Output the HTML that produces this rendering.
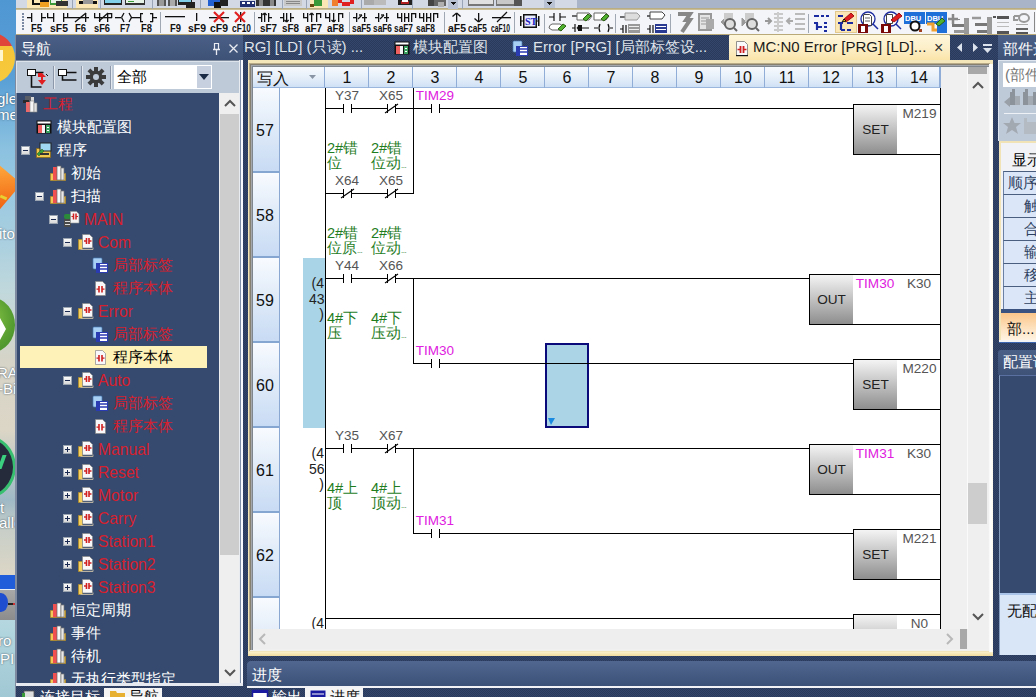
<!DOCTYPE html>
<html><head><meta charset="utf-8">
<style>
*{margin:0;padding:0;box-sizing:border-box}
html,body{width:1036px;height:697px;overflow:hidden;background:repeating-conic-gradient(#2a3a5a 0 25%,#33456a 0 50%) 0 0/2px 2px;font-family:"Liberation Sans",sans-serif}
.a{position:absolute}
.t{position:absolute;white-space:nowrap;line-height:1}
svg{position:absolute;overflow:visible}
.cj{font-size:15px;margin-top:-1px}
.exp{position:absolute;width:9px;height:9px;background:linear-gradient(#fbfbfb,#d8d8d8);border:1px solid #9aa3b0}
.exp::after{content:"";position:absolute;left:1px;top:3px;width:5px;height:1px;background:#1a2a50}
.plus::before{content:"";position:absolute;left:3px;top:1px;width:1px;height:5px;background:#1a2a50}
</style></head><body>

<div class="a" style="left:0;top:0;width:16px;height:697px;overflow:hidden;background:linear-gradient(#4f97d3 0px,#5aa0d6 80px,#8cc2e0 150px,#a9cfe0 240px,#c0d8dc 290px,#d6d4c8 360px,#dcd6c6 430px,#9fb9c6 500px,#c8cfc8 530px,#dcd6c6 575px)"><div class="a" style="left:-37px;top:32px;width:52px;height:52px;border-radius:50%;background:linear-gradient(#e0463a 0,#e0463a 27%,#f6c638 27%,#f7c93c 100%)"></div><div class="a" style="left:0;top:50px;width:3px;height:11px;background:#fff6d0"></div><div class="t" style="left:-3px;top:91px;font-size:15px;color:#fff;text-shadow:0 0 2px #345">gle</div><div class="t" style="left:-3px;top:107px;font-size:15px;color:#fff;text-shadow:0 0 2px #345">me</div><div class="a" style="left:-22px;top:168px;width:36px;height:36px;transform:rotate(40deg);background:linear-gradient(135deg,#ffb040,#f06010);border-radius:3px 3px 3px 14px"></div><div class="a" style="left:0;top:196px;width:7px;height:3px;transform:rotate(25deg);background:#e8d030"></div><div class="t" style="left:-1px;top:226px;font-size:15px;color:#fff;text-shadow:0 0 2px #345">ito</div><div class="a" style="left:-30px;top:298px;width:45px;height:54px;border-radius:50% 50% 50% 50%;background:radial-gradient(circle at 30% 40%,#9ad050,#5aa032 60%,#3e8a2a)"></div><div class="a" style="left:0;top:318px;width:0;height:0;border-left:6px solid #fff;border-top:11px solid transparent;border-bottom:11px solid transparent"></div><div class="t" style="left:-3px;top:365px;font-size:15px;color:#fff;text-shadow:0 0 2px #345">RA</div><div class="t" style="left:-2px;top:381px;font-size:15px;color:#fff;text-shadow:0 0 2px #345">-Bi</div><div class="a" style="left:-46px;top:435px;width:62px;height:64px;border-radius:50%;background:#262b3b;border:3px solid #38c070"></div><div class="a" style="left:0;top:455px;width:4px;height:14px;background:#3ad080;transform:skewX(-20deg)"></div><div class="t" style="left:0;top:500px;font-size:15px;color:#fff;text-shadow:0 0 2px #345">t</div><div class="t" style="left:-1px;top:515px;font-size:15px;color:#fff;text-shadow:0 0 2px #345">alle</div><div class="a" style="left:0;top:575px;width:16px;height:14px;background:#1f5ddb"></div><div class="a" style="left:0;top:589px;width:16px;height:1px;background:#e8eef8"></div><div class="a" style="left:0;top:590px;width:16px;height:30px;background:linear-gradient(#a8a8a8,#8c8c8c)"></div><div class="a" style="left:-6px;top:593px;width:14px;height:19px;border-radius:50%;background:#1f4fd0"></div><div class="a" style="left:8px;top:603px;width:8px;height:2px;background:#222;border-right:3px solid #d03030"></div><div class="a" style="left:0;top:620px;width:16px;height:77px;background:linear-gradient(#b5d8e0,#a0c8d4)"></div><div class="t" style="left:-2px;top:633px;font-size:15px;color:#fff;text-shadow:0 0 2px #345">ro</div><div class="t" style="left:0;top:651px;font-size:15px;color:#fff;text-shadow:0 0 2px #345">PI</div></div>
<div class="a" style="left:15px;top:35px;width:2px;height:662px;background:#7d8aa0"></div>
<svg style="left:16px;top:0" width="1020" height="9" shape-rendering="crispEdges"><rect x="0" y="0" width="561" height="9" fill="#d3d9e5"/><rect x="561" y="0" width="459" height="9" fill="#a9b4c8"/><rect x="0" y="8" width="1020" height="1" fill="#b9ad84"/><rect x="11" y="0" width="40" height="8" fill="#fbe7b5"/><rect x="60" y="0" width="22" height="8" fill="#fbe7b5"/><rect x="294" y="0" width="18" height="8" fill="#fbe7b5"/><rect x="16" y="0" width="15" height="5" fill="#111"/><rect x="18" y="0" width="11" height="3" fill="#fbe7b5"/><rect x="24" y="1" width="9" height="6" fill="#f0a020"/><rect x="24" y="0" width="9" height="2" fill="#111"/><rect x="34" y="0" width="12" height="5" fill="#3a9a3a"/><rect x="35" y="0" width="10" height="3" fill="#e8f4e8"/><rect x="40" y="1" width="12" height="5" fill="#333"/><rect x="56" y="0" width="1" height="9" fill="#9aa6b8"/><rect x="63" y="1" width="18" height="3" fill="#111"/><rect x="67" y="0" width="10" height="4" fill="#999"/><rect x="84" y="0" width="1" height="9" fill="#9aa6b8"/><rect x="88" y="0" width="18" height="5" fill="#222"/><rect x="89" y="0" width="16" height="3" fill="#7fd0e8"/><rect x="109" y="0" width="20" height="5" fill="#333"/><rect x="110" y="0" width="18" height="3" fill="#e8f4e8"/><rect x="112" y="1" width="6" height="1" fill="#3a9a3a"/><rect x="136" y="0" width="1" height="9" fill="#9aa6b8"/><rect x="141" y="0" width="9" height="6" fill="#555"/><rect x="143" y="0" width="5" height="6" fill="#999"/><rect x="152" y="0" width="9" height="6" fill="#555"/><rect x="154" y="0" width="5" height="6" fill="#aaa"/><rect x="162" y="0" width="14" height="5" fill="#222"/><rect x="163" y="0" width="12" height="2" fill="#7fd0e8"/><rect x="170" y="2" width="9" height="6" fill="#222"/><rect x="184" y="0" width="1" height="9" fill="#9aa6b8"/><rect x="192" y="0" width="12" height="6" fill="#2060d0"/><rect x="198" y="2" width="7" height="6" fill="#111"/><rect x="204" y="0" width="8" height="6" fill="#222"/><rect x="224" y="1" width="15" height="6" fill="#203070"/><rect x="226" y="2" width="3" height="2" fill="#fff"/><rect x="231" y="2" width="3" height="2" fill="#fff"/><rect x="236" y="2" width="2" height="2" fill="#fff"/><rect x="240" y="0" width="11" height="6" fill="#333"/><rect x="243" y="0" width="4" height="6" fill="#888"/><rect x="251" y="0" width="9" height="6" fill="#333"/><rect x="254" y="0" width="4" height="6" fill="#888"/><rect x="266" y="0" width="1" height="9" fill="#9aa6b8"/><rect x="268" y="0" width="18" height="6" fill="#c8c8c8"/><rect x="270" y="1" width="14" height="1" fill="#888"/><rect x="270" y="3" width="14" height="1" fill="#888"/><rect x="290" y="0" width="1" height="9" fill="#9aa6b8"/><rect x="298" y="0" width="8" height="6" fill="#3a9a3a"/><rect x="294" y="4" width="4" height="3" fill="#6a4a10"/><rect x="316" y="0" width="6" height="6" fill="#f08030"/><rect x="322" y="0" width="4" height="3" fill="#e02020"/><rect x="326" y="2" width="8" height="4" fill="#e02020"/><rect x="334" y="0" width="4" height="4" fill="#e02020"/><rect x="345" y="0" width="1" height="9" fill="#9aa6b8"/><rect x="348" y="0" width="10" height="5" fill="#aaa"/><rect x="358" y="0" width="12" height="5" fill="#bbb"/><rect x="382" y="0" width="14" height="5" fill="#222"/><rect x="385" y="1" width="8" height="3" fill="#b02020"/><rect x="386" y="0" width="6" height="2" fill="#fff"/><rect x="396" y="0" width="1" height="9" fill="#9aa6b8"/><rect x="412" y="0" width="6" height="6" fill="#444"/><rect x="418" y="0" width="12" height="6" fill="#666"/><rect x="422" y="2" width="6" height="5" fill="#b0b0b0"/><rect x="432" y="0" width="10" height="9" fill="#b9c2d2"/><path d="M434 2h6l-3 3z" fill="#111"/><rect x="446" y="0" width="1" height="9" fill="#9aa6b8"/><rect x="452" y="0" width="26" height="6" fill="#777"/><rect x="453" y="0" width="24" height="4" fill="#e0e0e0"/><rect x="480" y="0" width="26" height="6" fill="#777"/><rect x="481" y="0" width="24" height="4" fill="#c8c8c8"/><rect x="498" y="0" width="8" height="6" fill="#555"/><rect x="528" y="0" width="11" height="8" fill="#b9c2d2"/><path d="M530 2h6l-3 3z" fill="#111"/></svg>
<div class="a" style="left:16px;top:9px;width:1020px;height:26px;background:#f4f5f9;border-top:1px solid #cdbf95;border-bottom:1px solid #b9a878"></div>
<svg style="left:0;top:0" width="1036" height="35"><rect x="22" y="13" width="2" height="2" fill="#7b8aa2"/><rect x="22" y="16" width="2" height="2" fill="#7b8aa2"/><rect x="22" y="19" width="2" height="2" fill="#7b8aa2"/><rect x="22" y="22" width="2" height="2" fill="#7b8aa2"/><rect x="22" y="25" width="2" height="2" fill="#7b8aa2"/><rect x="22" y="28" width="2" height="2" fill="#7b8aa2"/><rect x="27" y="17" width="4" height="1.3" fill="#111"/><rect x="31" y="13" width="1.3" height="9" fill="#111"/><rect x="41" y="13" width="1.3" height="9" fill="#111"/><rect x="41" y="17" width="5" height="1.3" fill="#111"/><rect x="47" y="13" width="1.3" height="5" fill="#111"/><rect x="47" y="17" width="7" height="1.3" fill="#111"/><rect x="53" y="13" width="1.3" height="9" fill="#111"/><text x="31" y="31.5" font-family="Liberation Sans" font-weight="bold" font-size="10.5" fill="#111" textLength="11" lengthAdjust="spacingAndGlyphs">F5</text><text x="50" y="31.5" font-family="Liberation Sans" font-weight="bold" font-size="10.5" fill="#111" textLength="18" lengthAdjust="spacingAndGlyphs">sF5</text><rect x="63" y="13" width="1.3" height="9" fill="#111"/><rect x="63" y="17" width="5" height="1.3" fill="#111"/><rect x="67" y="13" width="1.3" height="5" fill="#111"/><rect x="68" y="17" width="21" height="1.3" fill="#111"/><path d="M75 22L86 13" stroke="#111" stroke-width="1.3"/><rect x="85" y="13" width="1.3" height="9" fill="#111"/><rect x="94" y="13" width="1.3" height="5" fill="#111"/><rect x="94" y="17" width="6" height="1.3" fill="#111"/><rect x="99" y="13" width="1.3" height="9" fill="#111"/><path d="M99 21L108 13" stroke="#111" stroke-width="1.3"/><rect x="100" y="17" width="12" height="1.3" fill="#111"/><rect x="107" y="13" width="1.3" height="9" fill="#111"/><rect x="107" y="13" width="5" height="1.3" fill="#111"/><rect x="111" y="13" width="1.3" height="5" fill="#111"/><text x="75" y="31.5" font-family="Liberation Sans" font-weight="bold" font-size="10.5" fill="#111" textLength="11" lengthAdjust="spacingAndGlyphs">F6</text><text x="94" y="31.5" font-family="Liberation Sans" font-weight="bold" font-size="10.5" fill="#111" textLength="16" lengthAdjust="spacingAndGlyphs">sF6</text><rect x="115" y="17" width="6" height="1.3" fill="#111"/><path d="M124 13L121.5 17.5" stroke="#111" stroke-width="1.3"/><path d="M121.5 17.5L124 22" stroke="#111" stroke-width="1.3"/><path d="M129 13L131.5 17.5" stroke="#111" stroke-width="1.3"/><path d="M131.5 17.5L129 22" stroke="#111" stroke-width="1.3"/><rect x="131" y="17" width="4" height="1.3" fill="#111"/><rect x="135" y="17" width="5" height="1.3" fill="#111"/><rect x="140" y="13" width="3" height="1.3" fill="#111"/><rect x="140" y="13" width="1.3" height="9" fill="#111"/><rect x="140" y="21" width="3" height="1.3" fill="#111"/><rect x="150" y="13" width="3" height="1.3" fill="#111"/><rect x="152" y="13" width="1.3" height="9" fill="#111"/><rect x="150" y="21" width="3" height="1.3" fill="#111"/><rect x="153" y="17" width="4" height="1.3" fill="#111"/><text x="120" y="31.5" font-family="Liberation Sans" font-weight="bold" font-size="10.5" fill="#111" textLength="10" lengthAdjust="spacingAndGlyphs">F7</text><text x="141" y="31.5" font-family="Liberation Sans" font-weight="bold" font-size="10.5" fill="#111" textLength="11" lengthAdjust="spacingAndGlyphs">F8</text><rect x="160" y="12" width="1" height="21" fill="#a0a8b4"/><rect x="165" y="16" width="20" height="1.3" fill="#111"/><text x="170" y="31.5" font-family="Liberation Sans" font-weight="bold" font-size="10.5" fill="#111" textLength="11" lengthAdjust="spacingAndGlyphs">F9</text><rect x="196" y="13" width="1.3" height="8" fill="#111"/><text x="188" y="31.5" font-family="Liberation Sans" font-weight="bold" font-size="10.5" fill="#111" textLength="18" lengthAdjust="spacingAndGlyphs">sF9</text><rect x="209" y="17" width="20" height="1.3" fill="#111"/><path d="M214 12L224 22" stroke="#e02020" stroke-width="2.2"/><path d="M224 12L214 22" stroke="#e02020" stroke-width="2.2"/><text x="210" y="31.5" font-family="Liberation Sans" font-weight="bold" font-size="10.5" fill="#111" textLength="18" lengthAdjust="spacingAndGlyphs">cF9</text><rect x="240" y="12" width="1.3" height="10" fill="#111"/><path d="M235 12L245 22" stroke="#e02020" stroke-width="2.2"/><path d="M245 12L235 22" stroke="#e02020" stroke-width="2.2"/><text x="232" y="31.5" font-family="Liberation Sans" font-weight="bold" font-size="10.5" fill="#111" textLength="19" lengthAdjust="spacingAndGlyphs">cF10</text><rect x="254" y="12" width="1" height="21" fill="#a0a8b4"/><rect x="258" y="17" width="3" height="1.3" fill="#111"/><rect x="261" y="13" width="1.3" height="9" fill="#111"/><rect x="264" y="13" width="1.3" height="9" fill="#111"/><path d="M262.5 15L264.6 13" stroke="#111" stroke-width="1.3"/><path d="M266.6 15L264.6 13" stroke="#111" stroke-width="1.3"/><rect x="268" y="13" width="1.3" height="9" fill="#111"/><rect x="268" y="17" width="4" height="1.3" fill="#111"/><text x="260" y="31.5" font-family="Liberation Sans" font-weight="bold" font-size="10.5" fill="#111" textLength="17" lengthAdjust="spacingAndGlyphs">sF7</text><rect x="280" y="17" width="3" height="1.3" fill="#111"/><rect x="283" y="13" width="1.3" height="9" fill="#111"/><rect x="286" y="13" width="1.3" height="9" fill="#111"/><path d="M284.5 20L286.6 22" stroke="#111" stroke-width="1.3"/><path d="M288.6 20L286.6 22" stroke="#111" stroke-width="1.3"/><rect x="290" y="13" width="1.3" height="9" fill="#111"/><rect x="290" y="17" width="4" height="1.3" fill="#111"/><text x="282" y="31.5" font-family="Liberation Sans" font-weight="bold" font-size="10.5" fill="#111" textLength="17" lengthAdjust="spacingAndGlyphs">sF8</text><rect x="303" y="13" width="1.3" height="5" fill="#111"/><rect x="303" y="17" width="5" height="1.3" fill="#111"/><rect x="307" y="13" width="1.3" height="9" fill="#111"/><rect x="311" y="13" width="1.3" height="9" fill="#111"/><path d="M309.5 15L311.6 13" stroke="#111" stroke-width="1.3"/><path d="M313.6 15L311.6 13" stroke="#111" stroke-width="1.3"/><rect x="316" y="13" width="1.3" height="9" fill="#111"/><rect x="316" y="13" width="4" height="1.3" fill="#111"/><rect x="320" y="13" width="1.3" height="5" fill="#111"/><text x="305" y="31.5" font-family="Liberation Sans" font-weight="bold" font-size="10.5" fill="#111" textLength="17" lengthAdjust="spacingAndGlyphs">aF7</text><rect x="325" y="13" width="1.3" height="5" fill="#111"/><rect x="325" y="17" width="5" height="1.3" fill="#111"/><rect x="329" y="13" width="1.3" height="9" fill="#111"/><rect x="333" y="13" width="1.3" height="9" fill="#111"/><path d="M331.5 20L333.6 22" stroke="#111" stroke-width="1.3"/><path d="M335.6 20L333.6 22" stroke="#111" stroke-width="1.3"/><rect x="338" y="13" width="1.3" height="9" fill="#111"/><rect x="338" y="13" width="4" height="1.3" fill="#111"/><rect x="342" y="13" width="1.3" height="5" fill="#111"/><text x="327" y="31.5" font-family="Liberation Sans" font-weight="bold" font-size="10.5" fill="#111" textLength="17" lengthAdjust="spacingAndGlyphs">aF8</text><rect x="349" y="12" width="1" height="21" fill="#a0a8b4"/><rect x="353" y="17" width="3" height="1.3" fill="#111"/><rect x="356" y="13" width="1.3" height="9" fill="#111"/><path d="M358 19L362 15" stroke="#111" stroke-width="1.3"/><path d="M359 15L362 15" stroke="#111" stroke-width="1.3"/><rect x="362" y="17" width="5" height="1.3" fill="#111"/><rect x="364" y="13" width="1.3" height="9" fill="#111"/><rect x="375" y="17" width="3" height="1.3" fill="#111"/><rect x="378" y="13" width="1.3" height="9" fill="#111"/><path d="M380 19L384 15" stroke="#111" stroke-width="1.3"/><path d="M381 15L384 15" stroke="#111" stroke-width="1.3"/><rect x="384" y="17" width="5" height="1.3" fill="#111"/><rect x="386" y="13" width="1.3" height="9" fill="#111"/><text x="352" y="31.5" font-family="Liberation Sans" font-weight="bold" font-size="10.5" fill="#111" textLength="19" lengthAdjust="spacingAndGlyphs">saF5</text><text x="373" y="31.5" font-family="Liberation Sans" font-weight="bold" font-size="10.5" fill="#111" textLength="19" lengthAdjust="spacingAndGlyphs">saF6</text><rect x="397" y="13" width="1.3" height="5" fill="#111"/><rect x="397" y="17" width="5" height="1.3" fill="#111"/><rect x="401" y="13" width="1.3" height="9" fill="#111"/><rect x="404" y="13" width="1.3" height="9" fill="#111"/><rect x="404" y="17" width="4" height="1.3" fill="#111"/><rect x="408" y="13" width="1.3" height="9" fill="#111"/><rect x="411" y="13" width="1.3" height="9" fill="#111"/><rect x="411" y="13" width="4" height="1.3" fill="#111"/><rect x="415" y="13" width="1.3" height="5" fill="#111"/><rect x="419" y="13" width="1.3" height="5" fill="#111"/><rect x="419" y="17" width="5" height="1.3" fill="#111"/><rect x="423" y="13" width="1.3" height="9" fill="#111"/><rect x="426" y="13" width="1.3" height="9" fill="#111"/><rect x="426" y="17" width="4" height="1.3" fill="#111"/><rect x="430" y="13" width="1.3" height="9" fill="#111"/><rect x="433" y="13" width="1.3" height="9" fill="#111"/><rect x="433" y="13" width="4" height="1.3" fill="#111"/><rect x="437" y="13" width="1.3" height="5" fill="#111"/><text x="394" y="31.5" font-family="Liberation Sans" font-weight="bold" font-size="10.5" fill="#111" textLength="19" lengthAdjust="spacingAndGlyphs">saF7</text><text x="416" y="31.5" font-family="Liberation Sans" font-weight="bold" font-size="10.5" fill="#111" textLength="19" lengthAdjust="spacingAndGlyphs">saF8</text><rect x="444" y="12" width="1" height="21" fill="#a0a8b4"/><rect x="456" y="13" width="1.3" height="9" fill="#111"/><path d="M452.5 16.5L456.6 13" stroke="#111" stroke-width="1.3"/><path d="M460.6 16.5L456.6 13" stroke="#111" stroke-width="1.3"/><text x="448" y="31.5" font-family="Liberation Sans" font-weight="bold" font-size="10.5" fill="#111" textLength="18" lengthAdjust="spacingAndGlyphs">aF5</text><rect x="478" y="13" width="1.3" height="9" fill="#111"/><path d="M474.5 18.5L478.6 22" stroke="#111" stroke-width="1.3"/><path d="M482.6 18.5L478.6 22" stroke="#111" stroke-width="1.3"/><text x="468" y="31.5" font-family="Liberation Sans" font-weight="bold" font-size="10.5" fill="#111" textLength="19" lengthAdjust="spacingAndGlyphs">caF5</text><rect x="492" y="17" width="19" height="1.3" fill="#111"/><path d="M497 22L507 12" stroke="#111" stroke-width="1.3"/><text x="491" y="31.5" font-family="Liberation Sans" font-weight="bold" font-size="10.5" fill="#111" textLength="19" lengthAdjust="spacingAndGlyphs">caF10</text><rect x="514" y="12" width="1" height="21" fill="#a0a8b4"/></svg>
<svg style="left:516px;top:10px" width="520" height="24"><rect x="4" y="6" width="1.5" height="10" fill="#111"/><rect x="22" y="6" width="1.5" height="10" fill="#111"/><path d="M5 11h2M21 11h2" stroke="#111" stroke-width="1.2" fill="none"/><rect x="7" y="4" width="14" height="14" fill="#111"/><rect x="8.5" y="5.5" width="11" height="11" fill="#e8ecff"/><text x="9" y="15" font-family="Liberation Serif" font-weight="bold" font-size="10" fill="#2020c0">ST</text><rect x="28" y="4" width="1" height="19" fill="#a0a8b4"/><path d="M33 7h5M38 3v8M44 3v8M44 7h6" stroke="#111" stroke-width="1.2" fill="none"/><path d="M33 18q0-3 3-4h8l3 2-3 4h-8z" stroke="#666" stroke-width="1" fill="#fff"/><path d="M42 19l5-5 3 2-5 5z" stroke="#2a6010" stroke-width="1" fill="#50b030"/><path d="M56 6h5" stroke="#111" stroke-width="1.2" fill="none"/><path d="M61 3h12l3 3-3 4h-12z" stroke="#666" stroke-width="1" fill="#fff"/><path d="M67 9l5-5 3 2-5 5z" stroke="#2a6010" stroke-width="1" fill="#50b030"/><path d="M56 18h3M59 14v8M61 18q2-3 4 0q-2 3-4 0M65 18h8" stroke="#111" stroke-width="1.2" fill="none"/><rect x="62" y="15" width="4" height="6" fill="#111"/><path d="M78 3h12l3 3-3 4h-12z" stroke="#666" stroke-width="1" fill="#fff"/><path d="M85 9l5-5 3 2-5 5z" stroke="#2a6010" stroke-width="1" fill="#50b030"/><path d="M78 18h4M84 14q-2 4 0 8M92 14q2 4 0 8M94 18h3" stroke="#111" stroke-width="1.2" fill="none"/><rect x="99" y="4" width="1" height="19" fill="#a0a8b4"/><path d="M104 7h5" stroke="#111" stroke-width="1.2" fill="none"/><path d="M109 3h12l3 3-3 4h-12z" stroke="#999" stroke-width="1" fill="#ddd"/><path d="M104 19h3M107 15v8M110 15v8" stroke="#111" stroke-width="1.2" fill="none"/><rect x="112" y="14" width="12" height="9" fill="#999"/><rect x="113" y="16" width="10" height="1" fill="#eee"/><rect x="113" y="19" width="10" height="1" fill="#eee"/><path d="M131 6h5" stroke="#111" stroke-width="1.2" fill="none"/><path d="M134 2h12l3 3-3 4h-12z" stroke="#444" stroke-width="1" fill="#fff"/><path d="M131 19h3M134 15v8M137 15v8" stroke="#111" stroke-width="1.2" fill="none"/><rect x="139" y="14" width="12" height="9" fill="#2a3a90"/><rect x="140" y="16" width="10" height="1" fill="#fff"/><rect x="140" y="19" width="10" height="1" fill="#fff"/><rect x="154" y="4" width="1" height="19" fill="#a0a8b4"/><path d="M162 4h12l-4 6h4l-8 12" stroke="#888" stroke-width="4" fill="none"/><rect x="182" y="3" width="14" height="18" fill="#999"/><rect x="184" y="5" width="10" height="14" fill="#e4e4e4"/><path d="M185 8h8M185 11h8M185 14h8" stroke="#999" stroke-width="1" fill="none"/><rect x="190" y="9" width="8" height="10" fill="#aaa"/><path d="M205 12l4-4v8z" stroke="#999" stroke-width="1" fill="#999"/><rect x="208" y="3" width="9" height="9" fill="#ccc"/><circle cx="214" cy="14" r="5" fill="#ddd" stroke="#666" stroke-width="2"/><path d="M218 18l3 3" stroke="#666" stroke-width="2" fill="none"/><path d="M226 8l4 4-4 4z" stroke="#999" stroke-width="1" fill="#999"/><rect x="229" y="3" width="9" height="9" fill="#ccc"/><circle cx="236" cy="14" r="5" fill="#ddd" stroke="#666" stroke-width="2"/><path d="M240 18l3 3" stroke="#666" stroke-width="2" fill="none"/><path d="M249 11h6M252 8l3 3-3 3" stroke="#999" stroke-width="2" fill="none"/><path d="M258 4h9M258 8h9M258 12h9M258 16h9M258 20h9" stroke="#bbb" stroke-width="1.5" fill="none"/><rect x="261" y="2" width="2" height="20" fill="#ccc"/><path d="M271 11h6M274 8l-3 3 3 3" stroke="#aaa" stroke-width="2" fill="none"/><path d="M279 4h10M279 9h10M279 14h10M279 19h10" stroke="#bbb" stroke-width="2" fill="none"/><rect x="292" y="4" width="1" height="19" fill="#a0a8b4"/><path d="M298 6h5M305 6h3M310 6h3M298 13h4M301 13v7M301 17h5M308 17h3M308 21h3M308 13h3" stroke="#1a2aa0" stroke-width="2.2" fill="none"/><rect x="319" y="1" width="22" height="22" fill="#fbe7b5"/><rect x="319" y="1" width="22" height="1" fill="#e0c890"/><rect x="319" y="22" width="22" height="1" fill="#e0c890"/><rect x="319" y="1" width="1" height="22" fill="#e0c890"/><rect x="340" y="1" width="1" height="22" fill="#e0c890"/><path d="M322 6h5M322 13h5M325 13v7M325 20h4M331 20h4M331 13h6" stroke="#1a2aa0" stroke-width="2.2" fill="none"/><path d="M327 10l8-7 3 3-8 6z" stroke="#a01010" stroke-width="1" fill="#e02020"/><path d="M326 12l2-3 2 2z" stroke="#111" stroke-width="1" fill="#ffd000"/><circle cx="352" cy="9" r="7" fill="#fff" stroke="#1a2aa0" stroke-width="1.3"/><rect x="347" y="4" width="8" height="11" fill="#fff"/><path d="M347.5 4.5h6l2 2v9h-8z" stroke="#444" stroke-width="1" fill="none"/><path d="M349 8h5M349 11h5" stroke="#666" stroke-width="1" fill="none"/><path d="M357 14l5 5" stroke="#1a2aa0" stroke-width="1.5" fill="none"/><rect x="342" y="14" width="10" height="9" fill="#7a0a0a"/><rect x="345" y="16" width="4" height="6" fill="#fff"/><circle cx="375" cy="9" r="7" fill="#fff" stroke="#1a2aa0" stroke-width="1.3"/><path d="M370.5 4.5h6v9h-6z" stroke="#444" stroke-width="1" fill="none"/><path d="M375 10l8-7 3 3-8 6z" stroke="#a01010" stroke-width="1" fill="#e02020"/><path d="M380 14l5 5" stroke="#1a2aa0" stroke-width="1.5" fill="none"/><rect x="365" y="14" width="10" height="9" fill="#7a0a0a"/><rect x="368" y="16" width="4" height="6" fill="#fff"/><rect x="388" y="2" width="21" height="12" fill="#1f6fd8"/><text x="389" y="11" font-family="Liberation Sans" font-weight="bold" font-size="7.5" fill="#fff">DBU</text><circle cx="399" cy="16" r="4.5" fill="#fff" stroke="#111" stroke-width="2"/><rect x="403" y="19" width="3" height="3" fill="#a04020"/><rect x="410" y="2" width="21" height="12" fill="#1f6fd8"/><text x="411" y="11" font-family="Liberation Sans" font-weight="bold" font-size="7.5" fill="#fff">DBU</text><path d="M411 14h6v6h6" stroke="#f0a030" stroke-width="3" fill="none"/><rect x="421" y="14" width="10" height="9" fill="#1f6fd8"/><path d="M420 14l6-6 3 3-6 5z" stroke="#2a6010" stroke-width="1" fill="#50b030"/><path d="M432 9h10M437 4v10" stroke="#888" stroke-width="2.5" fill="none"/><rect x="440" y="9" width="4" height="1" fill="#888"/><rect x="436" y="14" width="12" height="3" fill="#777"/><rect x="438" y="20" width="10" height="3" fill="#999"/><rect x="448" y="8" width="5" height="16" fill="#999"/><path d="M456 8h9" stroke="#999" stroke-width="2.5" fill="none"/><rect x="459" y="13" width="12" height="3" fill="#777"/><rect x="461" y="20" width="10" height="3" fill="#777"/><rect x="471" y="7" width="5" height="17" fill="#999"/><rect x="477" y="6" width="3" height="2" fill="#555"/><rect x="481" y="6" width="12" height="3" fill="#555"/><rect x="481" y="12" width="12" height="1" fill="#bbb"/><rect x="481" y="16" width="12" height="1" fill="#bbb"/><rect x="481" y="21" width="12" height="3" fill="#555"/></svg>
<svg style="left:1010px;top:10px" width="26" height="24"><path d="M4 6h6M4 6v4h4" stroke="#999" stroke-width="2" fill="none"/><ellipse cx="14" cy="8" rx="5" ry="4" fill="none" stroke="#999" stroke-width="2"/><rect x="6" y="14" width="12" height="1" fill="#aaa"/><rect x="6" y="18" width="12" height="2" fill="#666"/><rect x="6" y="22" width="12" height="2" fill="#555"/><rect x="24" y="2" width="1" height="20" fill="#888"/></svg>
<div class="a" style="left:16px;top:35px;width:227px;height:25px;background:linear-gradient(#4b6087,#3e5277)"></div>
<div class="t cj" style="left:21px;top:42px;color:#fff">导航</div>
<svg style="left:210px;top:40px" width="30" height="16"><path d="M4.5 3.5h4v6h-4z" fill="none" stroke="#e8ecf2" stroke-width="1.2"/><path d="M3 9.5h7M6.5 10v5" stroke="#e8ecf2" stroke-width="1.3"/><path d="M19.5 4.5l8 8M27.5 4.5l-8 8" stroke="#e8ecf2" stroke-width="1.3"/></svg>
<div class="a" style="left:16px;top:60px;width:227px;height:1px;background:#7d899c"></div>
<div class="a" style="left:16px;top:61px;width:227px;height:32px;background:#bfcad9;border:1px solid #dde3ea;border-bottom:none;border-right:none"></div>
<div class="a" style="left:114px;top:65px;width:98px;height:24px;background:#fff"></div>
<svg style="left:24px;top:66px" width="90" height="24"><rect x="3.5" y="3.5" width="8" height="6" fill="#fff" stroke="#111"/><path d="M7.5 10v11h10M11.5 6.5h8" stroke="#111" stroke-width="1.6" fill="none"/><path d="M14 7l4-0 0 0 4 4h-3v3h3l-4 5-4-5h3v-3h-3z" fill="#e02020"/><path d="M22 8l2 2" stroke="#111"/><rect x="29" y="0" width="1" height="23" fill="#8d99ab"/><rect x="30" y="0" width="1" height="23" fill="#e4e9f0"/><rect x="34.5" y="3.5" width="8" height="6" fill="#fff" stroke="#111"/><path d="M42.5 6.5h10M38.5 10v4h14" stroke="#111" stroke-width="1.6" fill="none"/><rect x="57" y="0" width="1" height="23" fill="#8d99ab"/><rect x="58" y="0" width="1" height="23" fill="#e4e9f0"/><g transform="translate(72 11)" fill="#3b3b3b"><circle r="6.5"/><rect x="-2" y="-10" width="4" height="20"/><rect x="-10" y="-2" width="20" height="4"/><rect x="-2" y="-10" width="4" height="20" transform="rotate(45)"/><rect x="-2" y="-10" width="4" height="20" transform="rotate(-45)"/></g><circle cx="72" cy="11" r="3" fill="#bfcad9"/><rect x="86" y="0" width="1" height="23" fill="#8d99ab"/><rect x="87" y="0" width="1" height="23" fill="#e4e9f0"/></svg>
<div class="a" style="left:197px;top:66px;width:14px;height:22px;background:#c6d0de"></div>
<div class="t cj" style="left:117px;top:70px;color:#000">全部</div>
<svg style="left:198px;top:73px" width="12" height="8"><path d="M1 1h10l-5 6z" fill="#1b2a44"/></svg>
<div class="a" style="left:17px;top:93px;width:202px;height:591px;background:#354a6e"></div>
<div class="a" style="left:219px;top:93px;width:21px;height:591px;background:#efefef"></div>
<div class="a" style="left:239px;top:60px;width:4px;height:626px;background:linear-gradient(90deg,#e8ecf0 0,#e8ecf0 1px,#8090a8 1px,#8090a8 2px,#f8faff 2px)"></div>
<div class="a" style="left:220px;top:114px;width:19px;height:441px;background:#cdcdcd"></div>
<svg style="left:222px;top:97px" width="16" height="12"><path d="M3 9l5-5 5 5" stroke="#555" stroke-width="2" fill="none"/></svg>
<svg style="left:222px;top:667px" width="16" height="12"><path d="M3 3l5 5 5-5" stroke="#555" stroke-width="2" fill="none"/></svg>
<div class="a" style="left:0;top:0;width:1036px;height:697px;clip-path:inset(93px 0 13px 0)"><svg style="left:22px;top:96px" width="16" height="16"><rect x="3" y="0" width="6" height="5" fill="#5a5e66"/><rect x="1" y="4" width="6" height="3" fill="#2a2a2a"/><rect x="9" y="1" width="3" height="4" fill="#d8d8d8"/><rect x="4" y="6" width="4" height="10" fill="#ee6a6a"/><rect x="8" y="5" width="4" height="11" fill="#f6f6f6" stroke="#888" stroke-width=".6"/><rect x="12" y="7" width="3" height="9" fill="#e0e0e0" stroke="#888" stroke-width=".6"/></svg>
<div class="t cj" style="left:43px;top:97px;color:#d7202e">工程</div>
<svg style="left:36px;top:119px" width="16" height="16"><rect x="0.5" y="1.5" width="15" height="13" fill="#111"/><rect x="1.5" y="2.5" width="13" height="2" fill="#fff"/><rect x="2" y="6" width="4" height="8" fill="#ee6060"/><rect x="6" y="6" width="3" height="8" fill="#f4f4f4"/><rect x="9" y="6" width="1" height="8" fill="#111"/><rect x="10" y="6" width="4" height="8" fill="#3aa060"/><rect x="11" y="8" width="2" height="1" fill="#fff"/><rect x="11" y="11" width="2" height="1" fill="#fff"/></svg>
<div class="t cj" style="left:57px;top:120px;color:#ffffff">模块配置图</div>
<svg style="left:36px;top:142px" width="16" height="16"><path d="M0.5 6.5h14v9h-14z" fill="#f0c850" stroke="#8a6a1a" stroke-width=".8"/><rect x="4" y="1" width="11" height="8" fill="#9fd8f0" stroke="#222" stroke-width="1"/><path d="M1 12l5-5 2 2-5 5z" fill="#3a9a3a" stroke="#1a5a1a" stroke-width=".5"/><rect x="4" y="11" width="9" height="2" fill="#333"/></svg>
<div class="exp " style="left:21px;top:146px"></div>
<div class="t cj" style="left:57px;top:143px;color:#ffffff">程序</div>
<svg style="left:50px;top:165px" width="16" height="16"><path d="M0.5 8.5h15v7h-15z" fill="#f2c85a" stroke="#b08a2a" stroke-width=".8"/><rect x="3" y="2" width="4" height="13" fill="#f05050"/><rect x="7" y="1" width="4" height="14" fill="#f8f8f8" stroke="#666" stroke-width=".7"/><rect x="11" y="3" width="3" height="12" fill="#e8e8e8" stroke="#777" stroke-width=".7"/></svg>
<div class="t cj" style="left:71px;top:166px;color:#ffffff">初始</div>
<svg style="left:50px;top:188px" width="16" height="16"><path d="M0.5 8.5h15v7h-15z" fill="#f2c85a" stroke="#b08a2a" stroke-width=".8"/><rect x="3" y="2" width="4" height="13" fill="#f05050"/><rect x="7" y="1" width="4" height="14" fill="#f8f8f8" stroke="#666" stroke-width=".7"/><rect x="11" y="3" width="3" height="12" fill="#e8e8e8" stroke="#777" stroke-width=".7"/></svg>
<div class="exp " style="left:35px;top:192px"></div>
<div class="t cj" style="left:71px;top:189px;color:#ffffff">扫描</div>
<svg style="left:64px;top:211px" width="16" height="16"><rect x="0" y="3" width="7" height="5" rx="2" fill="#2a8a3a"/><rect x="0" y="8" width="7" height="8" fill="#4a4a4a"/><rect x="1" y="10" width="5" height="1" fill="#ddd"/><rect x="1" y="13" width="5" height="1" fill="#ddd"/><path d="M6.5 0.5h6l2.5 2.5v9h-8.5z" fill="#f4f4f4" stroke="#999" stroke-width=".6"/><path d="M9.5 2.5v6M12 2.5v6" stroke="#d02020" stroke-width="1.5"/><path d="M7.5 5.5h2M12 5.5h2" stroke="#d02020" stroke-width="1.2"/></svg>
<div class="exp " style="left:49px;top:215px"></div>
<div class="t" style="left:84px;top:211.7px;font-size:15.7px;color:#d7202e">MAIN</div>
<svg style="left:78px;top:234px" width="16" height="16"><path d="M0.5 5.5h4v10h-4z" fill="#f5d060" stroke="#b08a2a" stroke-width=".8"/><path d="M2.5 15.5h12.5v-2" fill="none" stroke="#b8b0a0" stroke-width="1"/><path d="M4.5 0.5h7l3 3v10.5h-10z" fill="#f8f8fa" stroke="#888" stroke-width=".7"/><path d="M8.5 4v6M11 4v6" stroke="#d02020" stroke-width="1.6"/><path d="M6 7h2.5M11 7h2.5" stroke="#d02020" stroke-width="1.3"/></svg>
<div class="exp " style="left:63px;top:238px"></div>
<div class="t" style="left:98px;top:234.7px;font-size:15.7px;color:#d7202e">Com</div>
<svg style="left:92px;top:257px" width="16" height="16"><rect x="1" y="1" width="9" height="11" rx="1" fill="#a8d0f4" stroke="#4a7ab5" stroke-width=".7"/><rect x="4.5" y="6.5" width="11" height="9" fill="#fff" stroke="#2a3ab0" stroke-width="1"/><path d="M5 9h10M5 12h10" stroke="#2a3ab0" stroke-width="1.3"/><rect x="5" y="7" width="3" height="8" fill="#2a3ab0"/></svg>
<div class="t cj" style="left:113px;top:258px;color:#d7202e">局部标签</div>
<svg style="left:94px;top:280px" width="16" height="16"><path d="M1.5 1.5h7l3 3v11h-10z" fill="#f8f8fa" stroke="#888" stroke-width=".7"/><path d="M5 6v6.5M8 6v6.5" stroke="#d02020" stroke-width="1.6"/><path d="M2.5 9.2h2.5M8 9.2h2.5" stroke="#d02020" stroke-width="1.3"/></svg>
<div class="t cj" style="left:113px;top:281px;color:#d7202e">程序本体</div>
<svg style="left:78px;top:303px" width="16" height="16"><path d="M0.5 5.5h4v10h-4z" fill="#f5d060" stroke="#b08a2a" stroke-width=".8"/><path d="M2.5 15.5h12.5v-2" fill="none" stroke="#b8b0a0" stroke-width="1"/><path d="M4.5 0.5h7l3 3v10.5h-10z" fill="#f8f8fa" stroke="#888" stroke-width=".7"/><path d="M8.5 4v6M11 4v6" stroke="#d02020" stroke-width="1.6"/><path d="M6 7h2.5M11 7h2.5" stroke="#d02020" stroke-width="1.3"/></svg>
<div class="exp " style="left:63px;top:307px"></div>
<div class="t" style="left:98px;top:303.7px;font-size:15.7px;color:#d7202e">Error</div>
<svg style="left:92px;top:326px" width="16" height="16"><rect x="1" y="1" width="9" height="11" rx="1" fill="#a8d0f4" stroke="#4a7ab5" stroke-width=".7"/><rect x="4.5" y="6.5" width="11" height="9" fill="#fff" stroke="#2a3ab0" stroke-width="1"/><path d="M5 9h10M5 12h10" stroke="#2a3ab0" stroke-width="1.3"/><rect x="5" y="7" width="3" height="8" fill="#2a3ab0"/></svg>
<div class="t cj" style="left:113px;top:327px;color:#d7202e">局部标签</div>
<div class="a" style="left:20px;top:346px;width:187px;height:22px;background:#fff2b8"></div>
<svg style="left:94px;top:349px" width="16" height="16"><path d="M1.5 1.5h7l3 3v11h-10z" fill="#f8f8fa" stroke="#888" stroke-width=".7"/><path d="M5 6v6.5M8 6v6.5" stroke="#d02020" stroke-width="1.6"/><path d="M2.5 9.2h2.5M8 9.2h2.5" stroke="#d02020" stroke-width="1.3"/></svg>
<div class="t cj" style="left:113px;top:350px;color:#000000">程序本体</div>
<svg style="left:78px;top:372px" width="16" height="16"><path d="M0.5 5.5h4v10h-4z" fill="#f5d060" stroke="#b08a2a" stroke-width=".8"/><path d="M2.5 15.5h12.5v-2" fill="none" stroke="#b8b0a0" stroke-width="1"/><path d="M4.5 0.5h7l3 3v10.5h-10z" fill="#f8f8fa" stroke="#888" stroke-width=".7"/><path d="M8.5 4v6M11 4v6" stroke="#d02020" stroke-width="1.6"/><path d="M6 7h2.5M11 7h2.5" stroke="#d02020" stroke-width="1.3"/></svg>
<div class="exp " style="left:63px;top:376px"></div>
<div class="t" style="left:98px;top:372.7px;font-size:15.7px;color:#d7202e">Auto</div>
<svg style="left:92px;top:395px" width="16" height="16"><rect x="1" y="1" width="9" height="11" rx="1" fill="#a8d0f4" stroke="#4a7ab5" stroke-width=".7"/><rect x="4.5" y="6.5" width="11" height="9" fill="#fff" stroke="#2a3ab0" stroke-width="1"/><path d="M5 9h10M5 12h10" stroke="#2a3ab0" stroke-width="1.3"/><rect x="5" y="7" width="3" height="8" fill="#2a3ab0"/></svg>
<div class="t cj" style="left:113px;top:396px;color:#d7202e">局部标签</div>
<svg style="left:94px;top:418px" width="16" height="16"><path d="M1.5 1.5h7l3 3v11h-10z" fill="#f8f8fa" stroke="#888" stroke-width=".7"/><path d="M5 6v6.5M8 6v6.5" stroke="#d02020" stroke-width="1.6"/><path d="M2.5 9.2h2.5M8 9.2h2.5" stroke="#d02020" stroke-width="1.3"/></svg>
<div class="t cj" style="left:113px;top:419px;color:#d7202e">程序本体</div>
<svg style="left:78px;top:441px" width="16" height="16"><path d="M0.5 5.5h4v10h-4z" fill="#f5d060" stroke="#b08a2a" stroke-width=".8"/><path d="M2.5 15.5h12.5v-2" fill="none" stroke="#b8b0a0" stroke-width="1"/><path d="M4.5 0.5h7l3 3v10.5h-10z" fill="#f8f8fa" stroke="#888" stroke-width=".7"/><path d="M8.5 4v6M11 4v6" stroke="#d02020" stroke-width="1.6"/><path d="M6 7h2.5M11 7h2.5" stroke="#d02020" stroke-width="1.3"/></svg>
<div class="exp plus" style="left:63px;top:445px"></div>
<div class="t" style="left:98px;top:441.7px;font-size:15.7px;color:#d7202e">Manual</div>
<svg style="left:78px;top:464px" width="16" height="16"><path d="M0.5 5.5h4v10h-4z" fill="#f5d060" stroke="#b08a2a" stroke-width=".8"/><path d="M2.5 15.5h12.5v-2" fill="none" stroke="#b8b0a0" stroke-width="1"/><path d="M4.5 0.5h7l3 3v10.5h-10z" fill="#f8f8fa" stroke="#888" stroke-width=".7"/><path d="M8.5 4v6M11 4v6" stroke="#d02020" stroke-width="1.6"/><path d="M6 7h2.5M11 7h2.5" stroke="#d02020" stroke-width="1.3"/></svg>
<div class="exp plus" style="left:63px;top:468px"></div>
<div class="t" style="left:98px;top:464.7px;font-size:15.7px;color:#d7202e">Reset</div>
<svg style="left:78px;top:487px" width="16" height="16"><path d="M0.5 5.5h4v10h-4z" fill="#f5d060" stroke="#b08a2a" stroke-width=".8"/><path d="M2.5 15.5h12.5v-2" fill="none" stroke="#b8b0a0" stroke-width="1"/><path d="M4.5 0.5h7l3 3v10.5h-10z" fill="#f8f8fa" stroke="#888" stroke-width=".7"/><path d="M8.5 4v6M11 4v6" stroke="#d02020" stroke-width="1.6"/><path d="M6 7h2.5M11 7h2.5" stroke="#d02020" stroke-width="1.3"/></svg>
<div class="exp plus" style="left:63px;top:491px"></div>
<div class="t" style="left:98px;top:487.7px;font-size:15.7px;color:#d7202e">Motor</div>
<svg style="left:78px;top:510px" width="16" height="16"><path d="M0.5 5.5h4v10h-4z" fill="#f5d060" stroke="#b08a2a" stroke-width=".8"/><path d="M2.5 15.5h12.5v-2" fill="none" stroke="#b8b0a0" stroke-width="1"/><path d="M4.5 0.5h7l3 3v10.5h-10z" fill="#f8f8fa" stroke="#888" stroke-width=".7"/><path d="M8.5 4v6M11 4v6" stroke="#d02020" stroke-width="1.6"/><path d="M6 7h2.5M11 7h2.5" stroke="#d02020" stroke-width="1.3"/></svg>
<div class="exp plus" style="left:63px;top:514px"></div>
<div class="t" style="left:98px;top:510.7px;font-size:15.7px;color:#d7202e">Carry</div>
<svg style="left:78px;top:533px" width="16" height="16"><path d="M0.5 5.5h4v10h-4z" fill="#f5d060" stroke="#b08a2a" stroke-width=".8"/><path d="M2.5 15.5h12.5v-2" fill="none" stroke="#b8b0a0" stroke-width="1"/><path d="M4.5 0.5h7l3 3v10.5h-10z" fill="#f8f8fa" stroke="#888" stroke-width=".7"/><path d="M8.5 4v6M11 4v6" stroke="#d02020" stroke-width="1.6"/><path d="M6 7h2.5M11 7h2.5" stroke="#d02020" stroke-width="1.3"/></svg>
<div class="exp plus" style="left:63px;top:537px"></div>
<div class="t" style="left:98px;top:533.7px;font-size:15.7px;color:#d7202e">Station1</div>
<svg style="left:78px;top:556px" width="16" height="16"><path d="M0.5 5.5h4v10h-4z" fill="#f5d060" stroke="#b08a2a" stroke-width=".8"/><path d="M2.5 15.5h12.5v-2" fill="none" stroke="#b8b0a0" stroke-width="1"/><path d="M4.5 0.5h7l3 3v10.5h-10z" fill="#f8f8fa" stroke="#888" stroke-width=".7"/><path d="M8.5 4v6M11 4v6" stroke="#d02020" stroke-width="1.6"/><path d="M6 7h2.5M11 7h2.5" stroke="#d02020" stroke-width="1.3"/></svg>
<div class="exp plus" style="left:63px;top:560px"></div>
<div class="t" style="left:98px;top:556.7px;font-size:15.7px;color:#d7202e">Station2</div>
<svg style="left:78px;top:579px" width="16" height="16"><path d="M0.5 5.5h4v10h-4z" fill="#f5d060" stroke="#b08a2a" stroke-width=".8"/><path d="M2.5 15.5h12.5v-2" fill="none" stroke="#b8b0a0" stroke-width="1"/><path d="M4.5 0.5h7l3 3v10.5h-10z" fill="#f8f8fa" stroke="#888" stroke-width=".7"/><path d="M8.5 4v6M11 4v6" stroke="#d02020" stroke-width="1.6"/><path d="M6 7h2.5M11 7h2.5" stroke="#d02020" stroke-width="1.3"/></svg>
<div class="exp plus" style="left:63px;top:583px"></div>
<div class="t" style="left:98px;top:579.7px;font-size:15.7px;color:#d7202e">Station3</div>
<svg style="left:50px;top:602px" width="16" height="16"><path d="M0.5 8.5h15v7h-15z" fill="#f2c85a" stroke="#b08a2a" stroke-width=".8"/><rect x="3" y="2" width="4" height="13" fill="#f05050"/><rect x="7" y="1" width="4" height="14" fill="#f8f8f8" stroke="#666" stroke-width=".7"/><rect x="11" y="3" width="3" height="12" fill="#e8e8e8" stroke="#777" stroke-width=".7"/></svg>
<div class="t cj" style="left:71px;top:603px;color:#ffffff">恒定周期</div>
<svg style="left:50px;top:625px" width="16" height="16"><path d="M0.5 8.5h15v7h-15z" fill="#f2c85a" stroke="#b08a2a" stroke-width=".8"/><rect x="3" y="2" width="4" height="13" fill="#f05050"/><rect x="7" y="1" width="4" height="14" fill="#f8f8f8" stroke="#666" stroke-width=".7"/><rect x="11" y="3" width="3" height="12" fill="#e8e8e8" stroke="#777" stroke-width=".7"/></svg>
<div class="t cj" style="left:71px;top:626px;color:#ffffff">事件</div>
<svg style="left:50px;top:648px" width="16" height="16"><path d="M0.5 8.5h15v7h-15z" fill="#f2c85a" stroke="#b08a2a" stroke-width=".8"/><rect x="3" y="2" width="4" height="13" fill="#f05050"/><rect x="7" y="1" width="4" height="14" fill="#f8f8f8" stroke="#666" stroke-width=".7"/><rect x="11" y="3" width="3" height="12" fill="#e8e8e8" stroke="#777" stroke-width=".7"/></svg>
<div class="t cj" style="left:71px;top:649px;color:#ffffff">待机</div>
<svg style="left:50px;top:671px" width="16" height="16"><path d="M0.5 8.5h15v7h-15z" fill="#f2c85a" stroke="#b08a2a" stroke-width=".8"/><rect x="3" y="2" width="4" height="13" fill="#f05050"/><rect x="7" y="1" width="4" height="14" fill="#f8f8f8" stroke="#666" stroke-width=".7"/><rect x="11" y="3" width="3" height="12" fill="#e8e8e8" stroke="#777" stroke-width=".7"/></svg>
<div class="t cj" style="left:71px;top:672px;color:#ffffff">无执行类型指定</div></div>
<div class="a" style="left:243px;top:35px;width:755px;height:25px;background:repeating-conic-gradient(#2a3a5a 0 25%,#34466b 0 50%) 0 0/2px 2px"></div>
<div class="t" style="left:244px;top:38.5px;font-size:15px;color:#dfe3ea">RG] [LD] (只读) ...</div>
<svg style="left:394px;top:40px" width="16" height="16"><rect x="0.5" y="1.5" width="15" height="13" fill="#111"/><rect x="1.5" y="2.5" width="13" height="2" fill="#fff"/><rect x="2" y="6" width="4" height="8" fill="#ee6060"/><rect x="6" y="6" width="3" height="8" fill="#f4f4f4"/><rect x="9" y="6" width="1" height="8" fill="#111"/><rect x="10" y="6" width="4" height="8" fill="#3aa060"/><rect x="11" y="8" width="2" height="1" fill="#fff"/><rect x="11" y="11" width="2" height="1" fill="#fff"/></svg>
<div class="t" style="left:413px;top:38.5px;font-size:15px;color:#dfe3ea">模块配置图</div>
<svg style="left:512px;top:40px" width="16" height="16"><rect x="1" y="1" width="9" height="11" rx="1" fill="#a8d0f4" stroke="#4a7ab5" stroke-width=".7"/><rect x="4.5" y="6.5" width="11" height="9" fill="#fff" stroke="#2a3ab0" stroke-width="1"/><path d="M5 9h10M5 12h10" stroke="#2a3ab0" stroke-width="1.3"/><rect x="5" y="7" width="3" height="8" fill="#2a3ab0"/></svg>
<div class="t" style="left:533px;top:38.5px;font-size:15px;color:#dfe3ea">Error [PRG] [局部标签设...</div>
<div class="a" style="left:729px;top:35px;width:221px;height:26px;background:linear-gradient(#fff7dc,#fcefc8 50%,#fae3a6);border-radius:1px 1px 0 0"></div>
<svg style="left:735px;top:40px" width="16" height="16"><path d="M1.5 1.5h8l3 3v11h-11z" fill="#fafafa" stroke="#777" stroke-width=".8"/><rect x="1" y="15" width="12" height="1.2" fill="#111"/><path d="M5.5 6v7M8.5 6v7" stroke="#d02020" stroke-width="1.8"/><path d="M2.5 9.5h3M8.5 9.5h3" stroke="#d02020" stroke-width="1.5"/></svg>
<div class="t" style="left:753px;top:38.5px;font-size:15px;color:#1a1a1a">MC:N0 Error [PRG] [LD]...</div>
<div class="t" style="left:934px;top:40px;font-size:16px;color:#333">×</div>
<svg style="left:955px;top:42px" width="40" height="12"><path d="M7 1v9l-5-4.5z" fill="#dde3ec"/><path d="M18 1v9l5-4.5z" fill="#dde3ec"/><path d="M28 2h9v2h-9z M28 6h9l-4.5 5z" fill="#dde3ec"/></svg>
<div class="a" style="left:248px;top:60px;width:745px;height:596px;background:#f4e6bb"></div>
<div class="a" style="left:248px;top:652px;width:745px;height:4px;background:linear-gradient(#faf0cc,#f3dc9c)"></div>
<div class="a" style="left:249px;top:63px;width:741px;height:588px;background:#f2f0ea;border-left:1px solid #b8aa86;border-top:1px solid #b8aa86"></div>
<div class="a" style="left:250px;top:64px;width:739px;height:586px;background:#fff;border-left:1px solid #858070;border-top:1px solid #858070"></div>
<div class="a" style="left:251px;top:65px;width:738px;height:585px;background:#f0f0f0;border-left:1px solid #a4a8ac;border-top:1px solid #a4a8ac"></div>
<div class="a" style="left:252px;top:66px;width:737px;height:584px;background:#f0f0f0;border-left:1px solid #80868e;border-top:1px solid #80868e"></div>
<div class="a" style="left:989px;top:64px;width:4px;height:588px;background:linear-gradient(90deg,#f6f6f6,#ffffff 40%,#fdfaee)"></div>
<div class="a" style="left:0;top:0;width:1036px;height:697px;clip-path:inset(67px 95px 68px 253px)">
<div class="a" style="left:253px;top:67px;width:688px;height:562px;background:#fff"></div>
<div class="a" style="left:253px;top:67px;width:688px;height:21px;background:linear-gradient(#f7fafe,#e6eff9 50%,#cddff5)"></div>
<div class="a" style="left:253px;top:87px;width:688px;height:1px;background:#9ab6dc"></div>
<div class="t" style="left:257px;top:71px;font-size:15.5px;color:#111">写入</div>
<svg style="left:309px;top:75px" width="8" height="5"><path d="M0 0h7l-3.5 4z" fill="#8894a4"/></svg>
<div class="a" style="left:324px;top:67px;width:1px;height:21px;background:#8fadd6"></div>
<div class="t" style="left:325px;top:70px;width:44px;text-align:center;font-size:16px;color:#111">1</div>
<div class="a" style="left:368px;top:67px;width:1px;height:21px;background:#8fadd6"></div>
<div class="t" style="left:369px;top:70px;width:44px;text-align:center;font-size:16px;color:#111">2</div>
<div class="a" style="left:412px;top:67px;width:1px;height:21px;background:#8fadd6"></div>
<div class="t" style="left:413px;top:70px;width:44px;text-align:center;font-size:16px;color:#111">3</div>
<div class="a" style="left:456px;top:67px;width:1px;height:21px;background:#8fadd6"></div>
<div class="t" style="left:457px;top:70px;width:44px;text-align:center;font-size:16px;color:#111">4</div>
<div class="a" style="left:500px;top:67px;width:1px;height:21px;background:#8fadd6"></div>
<div class="t" style="left:501px;top:70px;width:44px;text-align:center;font-size:16px;color:#111">5</div>
<div class="a" style="left:544px;top:67px;width:1px;height:21px;background:#8fadd6"></div>
<div class="t" style="left:545px;top:70px;width:44px;text-align:center;font-size:16px;color:#111">6</div>
<div class="a" style="left:588px;top:67px;width:1px;height:21px;background:#8fadd6"></div>
<div class="t" style="left:589px;top:70px;width:44px;text-align:center;font-size:16px;color:#111">7</div>
<div class="a" style="left:632px;top:67px;width:1px;height:21px;background:#8fadd6"></div>
<div class="t" style="left:633px;top:70px;width:44px;text-align:center;font-size:16px;color:#111">8</div>
<div class="a" style="left:676px;top:67px;width:1px;height:21px;background:#8fadd6"></div>
<div class="t" style="left:677px;top:70px;width:44px;text-align:center;font-size:16px;color:#111">9</div>
<div class="a" style="left:720px;top:67px;width:1px;height:21px;background:#8fadd6"></div>
<div class="t" style="left:721px;top:70px;width:44px;text-align:center;font-size:16px;color:#111">10</div>
<div class="a" style="left:764px;top:67px;width:1px;height:21px;background:#8fadd6"></div>
<div class="t" style="left:765px;top:70px;width:44px;text-align:center;font-size:16px;color:#111">11</div>
<div class="a" style="left:808px;top:67px;width:1px;height:21px;background:#8fadd6"></div>
<div class="t" style="left:809px;top:70px;width:44px;text-align:center;font-size:16px;color:#111">12</div>
<div class="a" style="left:852px;top:67px;width:1px;height:21px;background:#8fadd6"></div>
<div class="t" style="left:853px;top:70px;width:44px;text-align:center;font-size:16px;color:#111">13</div>
<div class="a" style="left:896px;top:67px;width:1px;height:21px;background:#8fadd6"></div>
<div class="t" style="left:897px;top:70px;width:44px;text-align:center;font-size:16px;color:#111">14</div>
<div class="a" style="left:939px;top:67px;width:2px;height:21px;background:#8fadd6"></div>
<div class="a" style="left:253px;top:88px;width:27px;height:85px;background:linear-gradient(#f8fbff,#e3edf9 40%,#c8dbf4);border-bottom:2px solid #86a6d2;border-right:1px solid #8aa8d2"></div>
<div class="t" style="left:256px;top:123px;font-size:16px;color:#111">57</div>
<div class="a" style="left:253px;top:173px;width:27px;height:85px;background:linear-gradient(#f8fbff,#e3edf9 40%,#c8dbf4);border-bottom:2px solid #86a6d2;border-right:1px solid #8aa8d2"></div>
<div class="t" style="left:256px;top:208px;font-size:16px;color:#111">58</div>
<div class="a" style="left:253px;top:258px;width:27px;height:85px;background:linear-gradient(#f8fbff,#e3edf9 40%,#c8dbf4);border-bottom:2px solid #86a6d2;border-right:1px solid #8aa8d2"></div>
<div class="t" style="left:256px;top:293px;font-size:16px;color:#111">59</div>
<div class="a" style="left:253px;top:343px;width:27px;height:85px;background:linear-gradient(#f8fbff,#e3edf9 40%,#c8dbf4);border-bottom:2px solid #86a6d2;border-right:1px solid #8aa8d2"></div>
<div class="t" style="left:256px;top:378px;font-size:16px;color:#111">60</div>
<div class="a" style="left:253px;top:428px;width:27px;height:85px;background:linear-gradient(#f8fbff,#e3edf9 40%,#c8dbf4);border-bottom:2px solid #86a6d2;border-right:1px solid #8aa8d2"></div>
<div class="t" style="left:256px;top:463px;font-size:16px;color:#111">61</div>
<div class="a" style="left:253px;top:513px;width:27px;height:85px;background:linear-gradient(#f8fbff,#e3edf9 40%,#c8dbf4);border-bottom:2px solid #86a6d2;border-right:1px solid #8aa8d2"></div>
<div class="t" style="left:256px;top:548px;font-size:16px;color:#111">62</div>
<div class="a" style="left:253px;top:598px;width:27px;height:85px;background:linear-gradient(#f8fbff,#e3edf9 40%,#c8dbf4);border-bottom:2px solid #86a6d2;border-right:1px solid #8aa8d2"></div>
<div class="a" style="left:303px;top:258px;width:22px;height:170px;background:#a9d3e6"></div>
<div class="a" style="left:545px;top:343px;width:44px;height:85px;background:#abd4e6;border:2px solid #0a0a7a"></div>
<svg style="left:548px;top:418px" width="8" height="8"><path d="M0 0h7l-4 7z" fill="#1a8ae0"/></svg>
<div class="a" style="left:325px;top:108px;width:528px;height:1px;background:#000"></div>
<div class="a" style="left:344px;top:107px;width:7px;height:3px;background:#fff"></div>
<div class="a" style="left:343px;top:104px;width:1px;height:9px;background:#000"></div>
<div class="a" style="left:351px;top:104px;width:1px;height:9px;background:#000"></div>
<div class="t" style="left:325px;top:89px;width:44px;text-align:center;font-size:13.5px;color:#555">Y37</div>
<div class="a" style="left:388px;top:107px;width:7px;height:3px;background:#fff"></div>
<div class="a" style="left:387px;top:104px;width:1px;height:9px;background:#000"></div>
<div class="a" style="left:395px;top:104px;width:1px;height:9px;background:#000"></div>
<svg style="left:384px;top:103px" width="16" height="12"><path d="M1 10L14 1" stroke="#000" stroke-width="1.1"/></svg>
<div class="t" style="left:369px;top:89px;width:44px;text-align:center;font-size:13.5px;color:#555">X65</div>
<div class="a" style="left:432px;top:107px;width:7px;height:3px;background:#fff"></div>
<div class="a" style="left:431px;top:104px;width:1px;height:9px;background:#000"></div>
<div class="a" style="left:439px;top:104px;width:1px;height:9px;background:#000"></div>
<div class="t" style="left:413px;top:89px;width:44px;text-align:center;font-size:13.5px;color:#e020e0">TIM29</div>
<div class="t" style="left:327px;top:141px;font-size:14.6px;color:#1f7d1f;line-height:15.3px">2#错<br>位</div>
<div class="t" style="left:371px;top:141px;font-size:14.6px;color:#1f7d1f;line-height:15.3px">2#错<br>位动<span style="font-size:8px;letter-spacing:-0.5px">...</span></div>
<div class="a" style="left:853px;top:104px;width:88px;height:51px;border:1px solid #000;border-right:none;background:#fff"></div>
<div class="a" style="left:854px;top:105px;width:43px;height:49px;background:linear-gradient(#f4f4f4,#8e8e8e)"></div>
<div class="t" style="left:854px;top:123px;width:43px;text-align:center;font-size:13.6px;color:#222">SET</div>
<div class="t" style="left:898px;top:107px;width:43px;text-align:center;font-size:13.6px;color:#555">M219</div>
<div class="a" style="left:325px;top:193px;width:88px;height:1px;background:#000"></div>
<div class="a" style="left:344px;top:192px;width:7px;height:3px;background:#fff"></div>
<div class="a" style="left:343px;top:189px;width:1px;height:9px;background:#000"></div>
<div class="a" style="left:351px;top:189px;width:1px;height:9px;background:#000"></div>
<svg style="left:340px;top:188px" width="16" height="12"><path d="M1 10L14 1" stroke="#000" stroke-width="1.1"/></svg>
<div class="t" style="left:325px;top:174px;width:44px;text-align:center;font-size:13.5px;color:#555">X64</div>
<div class="a" style="left:388px;top:192px;width:7px;height:3px;background:#fff"></div>
<div class="a" style="left:387px;top:189px;width:1px;height:9px;background:#000"></div>
<div class="a" style="left:395px;top:189px;width:1px;height:9px;background:#000"></div>
<svg style="left:384px;top:188px" width="16" height="12"><path d="M1 10L14 1" stroke="#000" stroke-width="1.1"/></svg>
<div class="t" style="left:369px;top:174px;width:44px;text-align:center;font-size:13.5px;color:#555">X65</div>
<div class="t" style="left:327px;top:226px;font-size:14.6px;color:#1f7d1f;line-height:15.3px">2#错<br>位原<span style="font-size:8px;letter-spacing:-0.5px">...</span></div>
<div class="t" style="left:371px;top:226px;font-size:14.6px;color:#1f7d1f;line-height:15.3px">2#错<br>位动<span style="font-size:8px;letter-spacing:-0.5px">...</span></div>
<div class="a" style="left:413px;top:88px;width:1px;height:106px;background:#000"></div>
<div class="a" style="left:325px;top:278px;width:484px;height:1px;background:#000"></div>
<div class="a" style="left:344px;top:277px;width:7px;height:3px;background:#fff"></div>
<div class="a" style="left:343px;top:274px;width:1px;height:9px;background:#000"></div>
<div class="a" style="left:351px;top:274px;width:1px;height:9px;background:#000"></div>
<div class="t" style="left:325px;top:259px;width:44px;text-align:center;font-size:13.5px;color:#555">Y44</div>
<div class="a" style="left:388px;top:277px;width:7px;height:3px;background:#fff"></div>
<div class="a" style="left:387px;top:274px;width:1px;height:9px;background:#000"></div>
<div class="a" style="left:395px;top:274px;width:1px;height:9px;background:#000"></div>
<svg style="left:384px;top:273px" width="16" height="12"><path d="M1 10L14 1" stroke="#000" stroke-width="1.1"/></svg>
<div class="t" style="left:369px;top:259px;width:44px;text-align:center;font-size:13.5px;color:#555">X66</div>
<div class="t" style="left:327px;top:311px;font-size:14.6px;color:#1f7d1f;line-height:15.3px">4#下<br>压</div>
<div class="t" style="left:371px;top:311px;font-size:14.6px;color:#1f7d1f;line-height:15.3px">4#下<br>压动<span style="font-size:8px;letter-spacing:-0.5px">...</span></div>
<div class="a" style="left:809px;top:274px;width:132px;height:51px;border:1px solid #000;border-right:none;background:#fff"></div>
<div class="a" style="left:810px;top:275px;width:43px;height:49px;background:linear-gradient(#f4f4f4,#8e8e8e)"></div>
<div class="t" style="left:810px;top:293px;width:43px;text-align:center;font-size:13.6px;color:#222">OUT</div>
<div class="t" style="left:853px;top:277px;width:44px;text-align:center;font-size:13.6px;color:#e020e0">TIM30</div>
<div class="t" style="left:897px;top:277px;width:44px;text-align:center;font-size:13.6px;color:#555">K30</div>
<div class="a" style="left:413px;top:278px;width:1px;height:86px;background:#000"></div>
<div class="a" style="left:413px;top:363px;width:440px;height:1px;background:#000"></div>
<div class="a" style="left:432px;top:362px;width:7px;height:3px;background:#fff"></div>
<div class="a" style="left:431px;top:359px;width:1px;height:9px;background:#000"></div>
<div class="a" style="left:439px;top:359px;width:1px;height:9px;background:#000"></div>
<div class="t" style="left:413px;top:344px;width:44px;text-align:center;font-size:13.5px;color:#e020e0">TIM30</div>
<div class="a" style="left:853px;top:359px;width:88px;height:51px;border:1px solid #000;border-right:none;background:#fff"></div>
<div class="a" style="left:854px;top:360px;width:43px;height:49px;background:linear-gradient(#f4f4f4,#8e8e8e)"></div>
<div class="t" style="left:854px;top:378px;width:43px;text-align:center;font-size:13.6px;color:#222">SET</div>
<div class="t" style="left:898px;top:362px;width:43px;text-align:center;font-size:13.6px;color:#555">M220</div>
<div class="a" style="left:325px;top:448px;width:484px;height:1px;background:#000"></div>
<div class="a" style="left:344px;top:447px;width:7px;height:3px;background:#fff"></div>
<div class="a" style="left:343px;top:444px;width:1px;height:9px;background:#000"></div>
<div class="a" style="left:351px;top:444px;width:1px;height:9px;background:#000"></div>
<div class="t" style="left:325px;top:429px;width:44px;text-align:center;font-size:13.5px;color:#555">Y35</div>
<div class="a" style="left:388px;top:447px;width:7px;height:3px;background:#fff"></div>
<div class="a" style="left:387px;top:444px;width:1px;height:9px;background:#000"></div>
<div class="a" style="left:395px;top:444px;width:1px;height:9px;background:#000"></div>
<svg style="left:384px;top:443px" width="16" height="12"><path d="M1 10L14 1" stroke="#000" stroke-width="1.1"/></svg>
<div class="t" style="left:369px;top:429px;width:44px;text-align:center;font-size:13.5px;color:#555">X67</div>
<div class="t" style="left:327px;top:481px;font-size:14.6px;color:#1f7d1f;line-height:15.3px">4#上<br>顶</div>
<div class="t" style="left:371px;top:481px;font-size:14.6px;color:#1f7d1f;line-height:15.3px">4#上<br>顶动<span style="font-size:8px;letter-spacing:-0.5px">...</span></div>
<div class="a" style="left:809px;top:444px;width:132px;height:51px;border:1px solid #000;border-right:none;background:#fff"></div>
<div class="a" style="left:810px;top:445px;width:43px;height:49px;background:linear-gradient(#f4f4f4,#8e8e8e)"></div>
<div class="t" style="left:810px;top:463px;width:43px;text-align:center;font-size:13.6px;color:#222">OUT</div>
<div class="t" style="left:853px;top:447px;width:44px;text-align:center;font-size:13.6px;color:#e020e0">TIM31</div>
<div class="t" style="left:897px;top:447px;width:44px;text-align:center;font-size:13.6px;color:#555">K30</div>
<div class="a" style="left:413px;top:448px;width:1px;height:86px;background:#000"></div>
<div class="a" style="left:413px;top:533px;width:440px;height:1px;background:#000"></div>
<div class="a" style="left:432px;top:532px;width:7px;height:3px;background:#fff"></div>
<div class="a" style="left:431px;top:529px;width:1px;height:9px;background:#000"></div>
<div class="a" style="left:439px;top:529px;width:1px;height:9px;background:#000"></div>
<div class="t" style="left:413px;top:514px;width:44px;text-align:center;font-size:13.5px;color:#e020e0">TIM31</div>
<div class="a" style="left:853px;top:529px;width:88px;height:51px;border:1px solid #000;border-right:none;background:#fff"></div>
<div class="a" style="left:854px;top:530px;width:43px;height:49px;background:linear-gradient(#f4f4f4,#8e8e8e)"></div>
<div class="t" style="left:854px;top:548px;width:43px;text-align:center;font-size:13.6px;color:#222">SET</div>
<div class="t" style="left:898px;top:532px;width:43px;text-align:center;font-size:13.6px;color:#555">M221</div>
<div class="a" style="left:325px;top:618px;width:528px;height:1px;background:#000"></div>
<div class="a" style="left:853px;top:614px;width:88px;height:51px;border:1px solid #000;border-right:none;background:#fff"></div>
<div class="a" style="left:854px;top:615px;width:43px;height:49px;background:linear-gradient(#f4f4f4,#8e8e8e)"></div>
<div class="t" style="left:854px;top:633px;width:43px;text-align:center;font-size:13.6px;color:#222"></div>
<div class="t" style="left:898px;top:617px;width:43px;text-align:center;font-size:13.6px;color:#555">N0</div>
<div class="a" style="left:325px;top:88px;width:1px;height:541px;background:#000"></div>
<div class="a" style="left:940px;top:88px;width:1px;height:541px;background:#000"></div>
<div class="t" style="left:309px;top:276px;font-size:14px;color:#222;line-height:15.5px;text-align:right;width:15px">(4<br>43<br>)</div>
<div class="t" style="left:309px;top:446px;font-size:14px;color:#222;line-height:15.5px;text-align:right;width:15px">(4<br>56<br>)</div>
<div class="t" style="left:309px;top:616px;font-size:14px;color:#222;line-height:15.5px;text-align:right;width:15px">(4</div>
</div>
<div class="a" style="left:941px;top:67px;width:26px;height:562px;background:#f0f0f0"></div>
<div class="a" style="left:967px;top:67px;width:1px;height:562px;background:#fafafa"></div>
<div class="a" style="left:968px;top:67px;width:20px;height:582px;background:#efefef"></div>
<div class="a" style="left:968px;top:67px;width:19px;height:7px;background:#a8a8a8"></div>
<div class="a" style="left:968px;top:483px;width:19px;height:41px;background:#cdcdcd"></div>
<svg style="left:970px;top:80px" width="16" height="10"><path d="M3 8l5-5 5 5" stroke="#555" stroke-width="2" fill="none"/></svg>
<svg style="left:970px;top:612px" width="16" height="10"><path d="M3 2l5 5 5-5" stroke="#555" stroke-width="2" fill="none"/></svg>
<div class="a" style="left:253px;top:629px;width:715px;height:20px;background:#eeeeee"></div>
<svg style="left:258px;top:632px" width="10" height="14"><path d="M7 2l-5 5 5 5" stroke="#b8b8b8" stroke-width="2" fill="none"/></svg>
<svg style="left:945px;top:632px" width="10" height="14"><path d="M2 2l5 5-5 5" stroke="#b8b8b8" stroke-width="2" fill="none"/></svg>
<div class="a" style="left:960px;top:629px;width:7px;height:20px;background:#a8a8a8"></div>
<div class="a" style="left:993px;top:35px;width:5px;height:626px;background:repeating-conic-gradient(#2a3a5a 0 25%,#33456a 0 50%) 0 0/2px 2px"></div>
<div class="a" style="left:998px;top:35px;width:38px;height:25px;background:linear-gradient(#4b6087,#3e5277)"></div>
<div class="t cj" style="left:1003px;top:42px;color:#fff">部件选择</div>
<div class="a" style="left:998px;top:60px;width:38px;height:81px;background:#bfcad9;border-left:1px solid #dfe5ee;border-top:1px solid #dfe5ee"></div>
<div class="a" style="left:1003px;top:63px;width:33px;height:24px;background:#fff"></div>
<div class="t cj" style="left:1005px;top:68px;color:#777">(部件</div>
<svg style="left:1003px;top:88px" width="40" height="22"><path d="M1 14l6-5v3h4v4H7v3z" fill="#9aa0a8"/><rect x="7" y="4" width="5" height="13" fill="#8d939b"/><rect x="12" y="8" width="5" height="9" fill="#a5abb3"/><rect x="9" y="1" width="3" height="4" fill="#8d939b"/><rect x="20" y="4" width="5" height="13" fill="#8d939b"/><rect x="25" y="8" width="5" height="9" fill="#a5abb3"/><rect x="22" y="1" width="3" height="4" fill="#8d939b"/><rect x="30" y="4" width="5" height="13" fill="#8d939b"/></svg>
<div class="a" style="left:1004px;top:113px;width:32px;height:1px;background:#eef2f6"></div>
<svg style="left:1003px;top:116px" width="40" height="22"><path d="M9 1l2.5 6h6.5l-5 4 2 7-6-4-6 4 2-7-5-4h6.5z" fill="#a3a9b1"/><rect x="21" y="6" width="14" height="12" fill="#b5bbc3"/><rect x="21" y="2" width="3" height="4" fill="#b5bbc3"/></svg>
<div class="a" style="left:999px;top:141px;width:37px;height:202px;background:#f2e3b6"></div>
<div class="a" style="left:1001px;top:143px;width:35px;height:170px;background:#f0f2f6"></div>
<div class="t cj" style="left:1012px;top:153px;color:#000">显示</div>
<div class="a" style="left:1003px;top:171px;width:33px;height:23px;background:#dbe7f8;border-top:1px solid #4a5e80;border-left:1px solid #6a80a4"></div>
<div class="t cj" style="left:1008px;top:176px;color:#2e4060">顺序</div>
<div class="a" style="left:1003px;top:194px;width:33px;height:23px;background:#dbe7f8;border-top:1px solid #4a5e80;border-left:1px solid #6a80a4"></div>
<div class="t cj" style="left:1024px;top:199px;color:#2e4060">触</div>
<div class="a" style="left:1003px;top:217px;width:33px;height:23px;background:#dbe7f8;border-top:1px solid #4a5e80;border-left:1px solid #6a80a4"></div>
<div class="t cj" style="left:1024px;top:222px;color:#2e4060">合</div>
<div class="a" style="left:1003px;top:240px;width:33px;height:23px;background:#dbe7f8;border-top:1px solid #4a5e80;border-left:1px solid #6a80a4"></div>
<div class="t cj" style="left:1024px;top:245px;color:#2e4060">输</div>
<div class="a" style="left:1003px;top:263px;width:33px;height:23px;background:#dbe7f8;border-top:1px solid #4a5e80;border-left:1px solid #6a80a4"></div>
<div class="t cj" style="left:1024px;top:268px;color:#2e4060">移</div>
<div class="a" style="left:1003px;top:286px;width:33px;height:23px;background:#dbe7f8;border-top:1px solid #4a5e80;border-left:1px solid #6a80a4"></div>
<div class="t cj" style="left:1024px;top:291px;color:#2e4060">主</div>
<div class="a" style="left:1001px;top:309px;width:35px;height:4px;background:#3a5280"></div>
<div class="a" style="left:1001px;top:313px;width:35px;height:27px;background:linear-gradient(#fbc68a,#fde3c2 60%,#fff3e2)"></div>
<div class="t cj" style="left:1007px;top:322px;color:#111">部...</div>
<div class="a" style="left:999px;top:340px;width:37px;height:2px;background:#f4f4f4"></div>
<div class="a" style="left:999px;top:342px;width:37px;height:1px;background:#3d66b0"></div>
<div class="a" style="left:998px;top:350px;width:38px;height:25px;background:linear-gradient(#4b6087,#3e5277);border-radius:3px 0 0 0"></div>
<div class="t cj" style="left:1003px;top:355px;color:#fff">配置详细</div>
<div class="a" style="left:999px;top:375px;width:37px;height:218px;background:#354a6e;border-left:1px solid #8aa0c0;border-top:1px solid #5a70a0"></div>
<div class="a" style="left:999px;top:593px;width:37px;height:62px;background:#d8e6f8;border-left:1px solid #8aa0c0;border-top:2px solid #a9c3e8"></div>
<div class="t cj" style="left:1007px;top:604px;color:#111">无配置</div>
<div class="a" style="left:16px;top:683px;width:227px;height:3px;background:#e6eaf0"></div>
<div class="a" style="left:16px;top:686px;width:227px;height:11px;background:repeating-conic-gradient(#2a3a5a 0 25%,#33456a 0 50%) 0 0/2px 2px"></div>
<div class="a" style="left:104px;top:688px;width:58px;height:9px;background:#f4f4f4"></div>
<svg style="left:110px;top:690px" width="16" height="8"><path d="M0 1h6l1 2h8v6H0z" fill="#e8b030"/></svg>
<div class="t cj" style="left:129px;top:690px;color:#111">导航</div>
<svg style="left:22px;top:690px" width="16" height="8"><rect x="2" y="1" width="10" height="8" fill="#ddd" stroke="#555" stroke-width=".8"/><rect x="0" y="3" width="3" height="5" fill="#3a9a3a"/></svg>
<div class="t cj" style="left:40px;top:690px;color:#fff">连接目标</div>
<div class="a" style="left:247px;top:661px;width:789px;height:25px;background:linear-gradient(#51678f,#3c5178);border-radius:4px 0 0 0"></div>
<div class="t cj" style="left:252px;top:668px;color:#fff">进度</div>
<div class="a" style="left:247px;top:686px;width:789px;height:2px;background:#f0f2f6"></div>
<div class="a" style="left:247px;top:688px;width:789px;height:9px;background:repeating-conic-gradient(#2a3a5a 0 25%,#33456a 0 50%) 0 0/2px 2px"></div>
<div class="a" style="left:305px;top:688px;width:58px;height:9px;background:#f4f4f4"></div>
<svg style="left:252px;top:690px" width="16" height="8"><rect x="0.5" y="0.5" width="15" height="9" fill="#fff" stroke="#1a1aa0" stroke-width="1.5"/><rect x="1" y="1" width="14" height="2" fill="#1a1aa0"/></svg>
<div class="t cj" style="left:272px;top:690px;color:#fff">输出</div>
<svg style="left:310px;top:690px" width="16" height="8"><rect x="0.5" y="0.5" width="15" height="9" fill="#1a1aa0"/><path d="M3 3v2M5 3v2M7 3v2M9 3v2M11 3v2M13 3v2" stroke="#fff" stroke-width="1"/></svg>
<div class="t cj" style="left:330px;top:690px;color:#111">进度</div>
</body></html>
